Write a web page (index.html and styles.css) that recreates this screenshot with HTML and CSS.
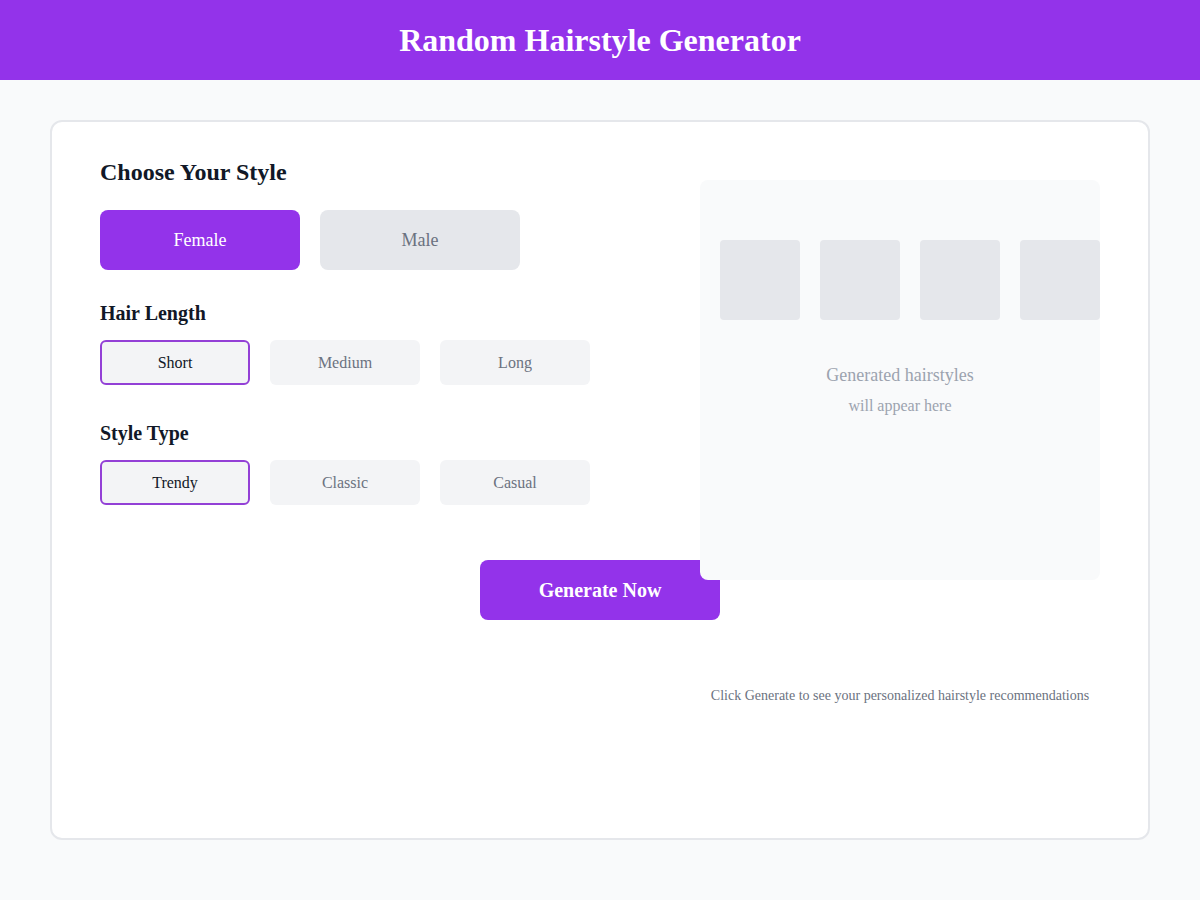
FILE: index.html
```html
<!DOCTYPE html>
<html lang="en">
<head>
<meta charset="utf-8">
<title>Random Hairstyle Generator</title>
<link rel="stylesheet" href="styles.css">
</head>
<body>
<header class="topbar">
  <h1 class="title">Random Hairstyle Generator</h1>
</header>
<main class="card">
  <div class="row">
    <section class="controls">
      <h2 class="heading-lg">Choose Your Style</h2>
      <div class="gender-group">
        <button class="gender-btn is-active">Female</button>
        <button class="gender-btn">Male</button>
      </div>
      <h3 class="heading-md">Hair Length</h3>
      <div class="option-group">
        <button class="option-btn is-selected">Short</button>
        <button class="option-btn">Medium</button>
        <button class="option-btn">Long</button>
      </div>
      <h3 class="heading-md heading-gap">Style Type</h3>
      <div class="option-group">
        <button class="option-btn is-selected">Trendy</button>
        <button class="option-btn">Classic</button>
        <button class="option-btn">Casual</button>
      </div>
    </section>
    <section class="preview">
      <div class="thumbs">
        <div class="thumb"></div>
        <div class="thumb"></div>
        <div class="thumb"></div>
        <div class="thumb"></div>
      </div>
      <p class="preview-main">Generated hairstyles</p>
      <p class="preview-sub">will appear here</p>
    </section>
  </div>
  <div class="action">
    <button class="generate-btn">Generate Now</button>
  </div>
  <p class="hint">Click Generate to see your personalized hairstyle recommendations</p>
</main>
</body>
</html>
```

FILE: styles.css
```css
* { box-sizing: border-box; }

body {
  margin: 0;
  background: #f9fafb;
  font-family: "Liberation Serif", "Times New Roman", serif;
  color: #111827;
}

.topbar {
  height: 80px;
  background: #9333ea;
  display: flex;
  align-items: center;
  justify-content: center;
}

.title {
  margin: 0;
  color: #ffffff;
  font-size: 32px;
  font-weight: 700;
  line-height: 1;
}

.card {
  margin: 40px 50px;
  height: 720px;
  background: #ffffff;
  border: 2px solid #e5e7eb;
  border-radius: 12px;
  padding: 36px 48px 0;
}

.row {
  display: flex;
  align-items: flex-start;
}

.controls {
  width: 490px;
}

.heading-lg {
  margin: 0;
  font-size: 24px;
  line-height: 28px;
  font-weight: 700;
  color: #111827;
}

.heading-md {
  margin: 31px 0 15px;
  font-size: 20px;
  line-height: 24px;
  font-weight: 700;
  color: #111827;
}

.heading-gap { margin-top: 36px; }

.gender-group {
  display: flex;
  gap: 20px;
  margin-top: 24px;
}

.gender-btn {
  width: 200px;
  height: 60px;
  border: none;
  border-radius: 8px;
  background: #e5e7eb;
  color: #6b7280;
  font-family: inherit;
  font-size: 18px;
}

.gender-btn.is-active {
  background: #9333ea;
  color: #ffffff;
}

.option-group {
  display: flex;
  gap: 20px;
}

.option-btn {
  width: 150px;
  height: 45px;
  border: 2px solid transparent;
  border-radius: 6px;
  background: #f3f4f6;
  color: #6b7280;
  font-family: inherit;
  font-size: 16px;
}

.option-btn.is-selected {
  border-color: #9340d6;
  color: #111827;
}

.preview {
  position: relative;
  z-index: 1;
  width: 400px;
  height: 400px;
  margin: 22px 0 0 110px;
  padding: 60px 0 0 20px;
  background: #f9fafb;
  border-radius: 8px;
}

.thumbs {
  display: flex;
  gap: 20px;
}

.thumb {
  width: 80px;
  height: 80px;
  flex: none;
  background: #e5e7eb;
  border-radius: 4px;
}

.preview-main {
  margin: 44px 0 0 -20px;
  text-align: center;
  font-size: 18px;
  line-height: 22px;
  color: #9ca3af;
}

.preview-sub {
  margin: 10px 0 0 -20px;
  text-align: center;
  font-size: 16px;
  line-height: 20px;
  color: #9ca3af;
}

.action {
  display: flex;
  justify-content: center;
  margin-top: -20px;
}

.generate-btn {
  width: 240px;
  height: 60px;
  border: none;
  border-radius: 8px;
  background: #9333ea;
  color: #ffffff;
  font-family: inherit;
  font-size: 20px;
  font-weight: 700;
}

.hint {
  width: 400px;
  margin: 68px 0 0 600px;
  text-align: center;
  font-size: 14px;
  line-height: 16px;
  color: #6b7280;
}
```
